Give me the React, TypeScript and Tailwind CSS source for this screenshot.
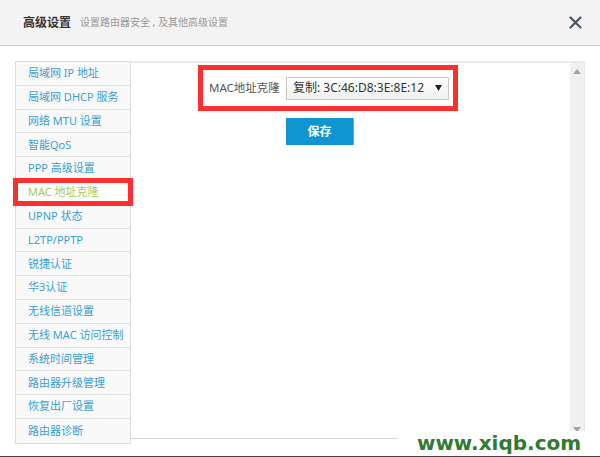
import React from 'react';

const menuItems = [
  '局域网 IP 地址',
  '局域网 DHCP 服务',
  '网络 MTU 设置',
  '智能QoS',
  'PPP 高级设置',
  'MAC 地址克隆',
  'UPNP 状态',
  'L2TP/PPTP',
  '锐捷认证',
  '华3认证',
  '无线信道设置',
  '无线 MAC 访问控制',
  '系统时间管理',
  '路由器升级管理',
  '恢复出厂设置',
  '路由器诊断'
];

const ACTIVE = 'MAC 地址克隆';

const font = { fontFamily: '"Noto Sans", "Noto Sans CJK SC", sans-serif' };

const Sidebar = () => (
  <div className="w-[116px] shrink-0 border border-[#dcdcdc] bg-[#f9f9f9]">
    {menuItems.map((item) => {
      const isActive = item === ACTIVE;
      return (
        <div
          key={item}
          className={`relative h-[23.8px] flex items-center pl-[12px] text-[11px] whitespace-nowrap border-b border-[#e3e3e3] last:border-b-0 ${
            isActive ? 'bg-white text-[#a3cd5c]' : 'text-[#3a9fd8]'
          }`}
        >
          {item}
          {isActive && (
            <div className="absolute -left-[3px] -right-[3px] -top-[3px] -bottom-[2px] border-[5px] border-[#fe2f2f]" />
          )}
        </div>
      );
    })}
  </div>
);

const Scrollbar = () => (
  <div className="w-[15px] shrink-0 bg-[#f0f0f0] border-r border-[#e4e4e4] flex flex-col justify-between items-center py-[6px]">
    <svg width="8" height="5" viewBox="0 0 8 5">
      <path d="M4 0 L8 5 L0 5 Z" fill="#a3a3a3" />
    </svg>
    <svg width="8" height="5" viewBox="0 0 8 5">
      <path d="M0 0 L8 0 L4 5 Z" fill="#a3a3a3" />
    </svg>
  </div>
);

const MacForm = () => (
  <div className="pl-[67px] pt-[2px]">
    <div className="w-[260px] h-[46px] border-[5px] border-[#fe2f2f] flex items-center pl-[6px]">
      <span className="w-[77px] text-[11.5px] text-[#555]">MAC地址克隆</span>
      <div className="w-[163px] h-[23px] border border-[#c9c9c9] bg-gradient-to-b from-white to-[#f1f1f1] flex items-center justify-between pl-[6px] pr-[6px]">
        <span className="text-[12px] text-[#333] whitespace-nowrap">复制: 3C:46:D8:3E:8E:12</span>
        <svg width="7" height="6" viewBox="0 0 7 6">
          <path d="M0 0 L7 0 L3.5 6 Z" fill="#222" />
        </svg>
      </div>
    </div>
    <button className="ml-[88px] mt-[7px] w-[68px] h-[27px] bg-[#0f96d0] border-r border-[#5fb8e0] text-white text-[12px] font-bold">
      保存
    </button>
  </div>
);

export default function App() {
  return (
    <div
      className="relative w-[600px] h-[457px] overflow-hidden bg-white border-b border-[#444]"
      style={font}
    >
      <div className="h-[46px] bg-[#f3f3f3] border-b border-[#cdcdcd] flex items-center pl-[23px] pr-[18px]">
        <span className="text-[12px] font-bold text-[#333]">高级设置</span>
        <span className="ml-[9px] text-[10px] text-[#999]">设置路由器安全 , 及其他高级设置</span>
        <svg className="ml-auto" width="13" height="13" viewBox="0 0 13 13">
          <path d="M1.5 1.5 L11.5 11.5 M11.5 1.5 L1.5 11.5" stroke="#4c5560" strokeWidth="2.2" strokeLinecap="round" />
        </svg>
      </div>

      <div className="flex items-start mt-[15px] px-[15px]">
        <Sidebar />
        <div className="flex-1 h-[378px] border-t-2 border-[#ececec] border-b border-b-[#d6d6d6] flex">
          <div className="flex-1">
            <MacForm />
          </div>
          <Scrollbar />
        </div>
      </div>

      <div className="absolute right-0 bottom-0 w-[202px] h-[25px] bg-white flex items-end justify-center pb-[3px]">
        <span
          className="text-[20px] font-bold leading-none text-[#2e7b32]"
          style={{ fontFamily: '"DejaVu Sans", sans-serif' }}
        >
          www.xiqb.com
        </span>
      </div>
    </div>
  );
}
